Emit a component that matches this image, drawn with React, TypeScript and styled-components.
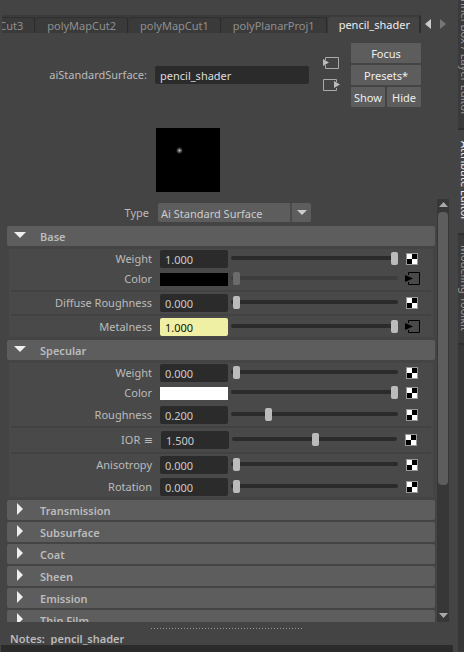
import React from "react";
import styled, { createGlobalStyle, css } from "styled-components";

const Global = createGlobalStyle`
  * { box-sizing: border-box; }
  body { margin: 0; background: #444; color: #bbb; font: 11px/16px "Noto Sans", "Open Sans", sans-serif; overflow: hidden; }
  button, input, select { font: inherit; color: inherit; margin: 0; border: 0; padding: 0; }
`;

const Page = styled.div`
  display: flex;
  height: 100vh;
`;
const Editor = styled.main`
  flex: 1;
  min-width: 0;
  display: flex;
  flex-direction: column;
`;

/* Node tabs */
const TabBar = styled.nav`
  display: flex;
  align-items: flex-start;
  padding: 15px 12px 0 2px;
`;
const TabStrip = styled.div`
  flex: 1;
  min-width: 0;
  display: flex;
  justify-content: flex-end;
  gap: 1px;
  overflow: hidden;
  background: #383838;
  border-top: 2px solid #3b3b3b;
  border-right: 2px solid #2f2f2f;
`;
const Tab = styled.button<{ $active?: boolean }>`
  flex: none;
  height: 16px;
  padding: 0 ${(p) => (p.$active ? 9 : 11)}px 0 11px;
  line-height: 16px;
  background: ${(p) => (p.$active ? "#444" : "#3a3a3a")};
  color: ${(p) => (p.$active ? "#eee" : "#8f8f8f")};
  border-radius: 3px 3px 0 0;
  ${(p) =>
    !p.$active &&
    css`
      border-top: 1px solid #2f2f2f;
      border-right: 1px solid #2b2b2b;
    `}
`;
const TabArrows = styled.div`
  display: flex;
  gap: 9px;
  padding: 4px 0 0 4px;
`;
const IconButton = styled.button`
  display: block;
  background: none;
  line-height: 0;
`;

/* Node header */
const NodeHeader = styled.header`
  display: grid;
  grid-template-columns: 147px minmax(80px, 154px) 16px 70px;
  column-gap: 8px;
  align-items: center;
  padding-top: 10px;
`;
const NodeLabel = styled.label`
  text-align: right;
`;
const NameInput = styled.input`
  width: 100%;
  height: 18px;
  padding: 1px 5px 0;
  background: #2b2b2b;
  color: #ddd;
  border-radius: 2px;
`;
const Connections = styled.div`
  display: grid;
  gap: 8px;
  padding: 0 0 2px 6px;
`;
const HeaderButtons = styled.div`
  display: grid;
  grid-template-columns: 1fr 1fr;
  gap: 2px;
  margin-left: 10px;
  width: 70px;
`;
const PushButton = styled.button<{ $wide?: boolean }>`
  height: 20px;
  background: #5d5d5d;
  color: #eee;
  border-radius: 1px;
  padding-top: 2px;
  line-height: 16px;
  grid-column: ${(p) => (p.$wide ? "1 / -1" : "auto")};
`;
const Swatch = styled.div`
  height: 64px;
  margin: 21px 0 7px 156px;
  line-height: 0;
`;

/* Attribute list */
const ScrollPane = styled.div`
  flex: 1;
  min-height: 0;
  display: flex;
  gap: 2px;
  padding: 0 9px 0 7px;
`;
const Attributes = styled.div`
  flex: 1;
  min-width: 0;
  overflow: hidden;
`;
const ScrollBar = styled.div`
  width: 12px;
  display: flex;
  flex-direction: column;
  align-items: center;
  background: #373737;
  padding: 3px 0 4px;
`;
const ScrollTrack = styled.div`
  flex: 1;
  align-self: stretch;
  padding: 5px 1px 0;
`;
const ScrollThumb = styled.div`
  height: 68%;
  background: #5d5d5d;
  border-radius: 4px;
`;
const TypeRow = styled.div`
  display: flex;
  align-items: center;
  gap: 9px;
  padding: 4px 0;
`;
const TypeLabel = styled.label`
  width: 142px;
  text-align: right;
`;
const SelectBox = styled.div`
  display: grid;
  grid-template-columns: 132px 19px;
  gap: 2px;
  align-items: center;
  height: 19px;
  background: linear-gradient(90deg, #5d5d5d 132px, #4a4a4a 132px, #4a4a4a 134px, #5d5d5d 134px);
  border-radius: 2px;
`;
const TypeSelect = styled.select`
  grid-area: 1 / 1 / 2 / 3;
  appearance: none;
  width: 100%;
  height: 19px;
  padding: 2px 3px 0;
  background: transparent;
  color: #ccc;
`;
const SelectArrow = styled.span`
  grid-area: 1 / 2;
  justify-self: center;
  line-height: 0;
  pointer-events: none;
`;
const SectionHeader = styled.button`
  display: flex;
  align-items: center;
  width: 100%;
  height: 20px;
  margin-bottom: 2px;
  padding: 2px 0 0;
  background: #5d5d5d;
  border-radius: 2px;
  font-weight: 600;
  text-align: left;
`;
const Twisty = styled.span`
  width: 33px;
  padding: 0 0 4px 7px;
  line-height: 0;
`;
const SectionBody = styled.div`
  display: flex;
  flex-direction: column;
  margin: 3px 2px;
  padding: 1px 2px 0;
  background: #494949;
`;
const Row = styled.div<{ $swatch?: boolean; $inset?: boolean }>`
  display: grid;
  grid-template-columns: 149px 68px minmax(60px, 1fr) 33px;
  align-items: center;
  height: ${(p) => (p.$swatch ? 20 : 18)}px;
  margin: ${(p) => (p.$swatch ? "0" : p.$inset ? "1px 0 2px" : "0 0 1px")};
  padding: 0 ${(p) => (p.$inset ? 1 : 0)}px;
`;
const AttrName = styled.div`
  padding-right: 8px;
  text-align: right;
`;
const MenuMark = styled.span`
  font-family: "DejaVu Sans", sans-serif;
  line-height: 1;
`;
const Gap = styled.div`
  height: 3px;
`;
const Rule = styled.hr`
  width: 100%;
  height: 2px;
  margin: 1px 0 2px;
  border: 0;
  background: #424242;
`;
const NumberField = styled.input<{ $keyed?: boolean }>`
  width: 68px;
  height: 18px;
  padding: 1px 5px 0;
  border-radius: 2px;
  background: ${(p) => (p.$keyed ? "#f0f0a5" : "#2b2b2b")};
  color: ${(p) => (p.$keyed ? "#111" : "#ccc")};
`;
const ColorChip = styled.button<{ $color: string }>`
  display: block;
  width: 68px;
  height: 13px;
  background: ${(p) => p.$color};
`;
const Field = styled.div`
  line-height: 0;
`;
const Track = styled.div<{ $off?: boolean }>`
  height: 4px;
  margin: 0 0 2px 3px;
  border-radius: 2px;
  background: ${(p) => (p.$off ? "#3d3d3d" : "#2b2b2b")};
`;
const Range = styled.input`
  appearance: none;
  display: block;
  width: calc(100% - 2px);
  height: 13px;
  margin-left: 2px;
  background: transparent;
  transform: translateY(-4px);
  &::-webkit-slider-thumb {
    appearance: none;
    width: 7px;
    height: 13px;
    border-radius: 2px;
    background: #bbb;
  }
  &:disabled::-webkit-slider-thumb { background: #6b6b6b; }
`;
const MapCell = styled.div<{ $linked?: boolean }>`
  padding: 0 0 1px ${(p) => (p.$linked ? 7 : 8)}px;
`;

/* Footer */
const SplitterBar = styled.div`
  padding: 6px 5px 0 1px;
`;
const Splitter = styled.div`
  width: 152px;
  height: 1px;
  margin: 0 auto;
  background: repeating-linear-gradient(90deg, #999 0 1px, transparent 1px 3px);
`;
const Notes = styled.label`
  padding: 2px 10px 0;
  height: 16px;
  font-weight: 600;
  white-space: pre;
`;
const NotesBox = styled.textarea`
  height: 7px;
  margin: 0 5px 0 1px;
  border: 0;
  padding: 0;
  resize: none;
  background: #2b2b2b;
`;

/* Docked panel tabs */
const Dock = styled.aside`
  width: 6px;
  flex: none;
  overflow: hidden;
  background: #373737;
`;
const DockTab = styled.button<{ $h: number; $active?: boolean }>`
  display: flex;
  align-items: flex-end;
  justify-content: flex-end;
  width: 20px;
  height: ${(p) => p.$h}px;
  padding: 0 0 12px;
  line-height: 14px;
  writing-mode: vertical-rl;
  white-space: nowrap;
  background: ${(p) => (p.$active ? "#444" : "#3a3a3a")};
  color: ${(p) => (p.$active ? "#eee" : "#999")};
  border-bottom: 2px solid #2e2e2e;
`;

const Triangle = ({ points, w, h, fill = "#ccc" }: { points: string; w: number; h: number; fill?: string }) => (
  <svg width={w} height={h} viewBox={`0 0 ${w} ${h}`}>
    <polygon points={points} fill={fill} />
  </svg>
);

const Checker = () => (
  <svg width="12" height="12" shapeRendering="crispEdges">
    <rect width="12" height="12" fill="#999" />
    <rect x="1" y="1" width="10" height="10" fill="#fff" />
    <path d="M6 1h5v5H6zM1 6h5v5H1z" fill="#000" />
  </svg>
);

const Linked = () => (
  <svg width="15" height="13">
    <path d="M3.500 3V.5H14.500V12.500H3.500V10" fill="none" stroke="#000" />
    <path d="M0 3L8 6.500L0 10z" fill="#000" />
  </svg>
);

type AttrProps = {
  name: string;
  id: string;
  value: number;
  text?: string;
  color?: string;
  keyed?: boolean;
  linked?: boolean;
  off?: boolean;
  max?: number;
  menu?: boolean;
};

const Attr = ({ name, id, value, text, color, keyed, linked, off, max = 1, menu }: AttrProps) => (
  <Row $swatch={!!color} $inset={menu}>
    <AttrName>
      <label htmlFor={id}>
        {name}
        {menu && <MenuMark> ≡</MenuMark>}
      </label>
    </AttrName>
    <Field>{color ? <ColorChip id={id} $color={color} /> : <NumberField id={id} defaultValue={text} $keyed={keyed} />}</Field>
    <Track $off={off}>
      <Range type="range" aria-label={`${name} slider`} min={0} max={max} step={0.001} defaultValue={value} disabled={off} />
    </Track>
    <MapCell $linked={linked}>
      <IconButton aria-label={`${name} map`}>{linked ? <Linked /> : <Checker />}</IconButton>
    </MapCell>
  </Row>
);

const Section = ({ title, open }: { title: string; open?: boolean }) => (
  <SectionHeader aria-expanded={!!open}>
    <Twisty>
      {open ? <Triangle points="0,0 12,0 6,6" w={12} h={6} fill="#eee" /> : <Triangle points="3,0 9,6 3,12" w={12} h={12} fill="#eee" />}
    </Twisty>
    {title}
  </SectionHeader>
);

export default function App() {
  return (
    <Page>
      <Global />
      <Editor>
        <TabBar>
          <TabStrip>
            <Tab>polyMapCut3</Tab>
            <Tab>polyMapCut2</Tab>
            <Tab>polyMapCut1</Tab>
            <Tab>polyPlanarProj1</Tab>
            <Tab $active>pencil_shader</Tab>
          </TabStrip>
          <TabArrows>
            <IconButton aria-label="Previous tab"><Triangle points="6,0 6,10 0,5" w={6} h={10} /></IconButton>
            <IconButton aria-label="Next tab"><Triangle points="0,0 0,10 6,5" w={6} h={10} fill="#777" /></IconButton>
          </TabArrows>
        </TabBar>
        <NodeHeader>
          <NodeLabel htmlFor="node">aiStandardSurface:</NodeLabel>
          <NameInput id="node" defaultValue="pencil_shader" />
          <Connections>
            <IconButton aria-label="Input connection">
              <svg width="17" height="14">
                <path d="M2.500 4V1.500H15.500V12.500H2.500V9" fill="none" stroke="#aaa" />
                <path d="M0 3L6 6.500L0 10z" fill="#bbb" />
              </svg>
            </IconButton>
            <IconButton aria-label="Output connection">
              <svg width="17" height="14">
                <path d="M13.500 4V1.500H.5V12.500H13.500V10" fill="none" stroke="#aaa" />
                <path d="M11 3L17 6.500L11 10z" fill="#bbb" />
              </svg>
            </IconButton>
          </Connections>
          <HeaderButtons>
            <PushButton $wide>Focus</PushButton>
            <PushButton $wide>Presets*</PushButton>
            <PushButton>Show</PushButton>
            <PushButton>Hide</PushButton>
          </HeaderButtons>
        </NodeHeader>
        <Swatch>
          <svg width="64" height="64" role="img" aria-label="Material sample">
            <defs>
              <radialGradient id="glint">
                <stop offset="0" stopColor="#ccc" />
                <stop offset="0.4" stopColor="#666" />
                <stop offset="1" stopColor="#000" />
              </radialGradient>
            </defs>
            <rect width="64" height="64" />
            <circle cx="23.500" cy="22.500" r="3.500" fill="url(#glint)" />
          </svg>
        </Swatch>
        <ScrollPane>
          <Attributes>
            <TypeRow>
              <TypeLabel htmlFor="type">Type</TypeLabel>
              <SelectBox>
                <TypeSelect id="type"><option>Ai Standard Surface</option></TypeSelect>
                <SelectArrow><Triangle points="0,0 10,0 5,5" w={10} h={5} /></SelectArrow>
              </SelectBox>
            </TypeRow>
            <Section title="Base" open />
            <SectionBody>
              <Attr id="bw" name="Weight" text="1.000" value={1} />
              <Attr id="bc" name="Color" color="#000" value={0} linked off />
              <Rule />
              <Attr id="bd" name="Diffuse Roughness" text="0.000" value={0} />
              <Rule />
              <Attr id="bm" name="Metalness" text="1.000" value={1} keyed linked />
            </SectionBody>
            <Section title="Specular" open />
            <SectionBody>
              <Attr id="sw" name="Weight" text="0.000" value={0} />
              <Attr id="sc" name="Color" color="#fff" value={1} />
              <Gap />
              <Attr id="sr" name="Roughness" text="0.200" value={0.2} />
              <Rule />
              <Attr id="si" name="IOR" text="1.500" value={1.5} max={3} menu />
              <Rule />
              <Attr id="sa" name="Anisotropy" text="0.000" value={0} />
              <Gap />
              <Attr id="so" name="Rotation" text="0.000" value={0} />
            </SectionBody>
            {["Transmission", "Subsurface", "Coat", "Sheen", "Emission", "Thin Film"].map((t) => (
              <Section key={t} title={t} />
            ))}
          </Attributes>
          <ScrollBar>
            <Triangle points="1,5 10,5 5.500,0" w={10} h={5} fill="#aaa" />
            <ScrollTrack><ScrollThumb /></ScrollTrack>
            <Triangle points="1,0 10,0 5.500,5" w={10} h={5} fill="#aaa" />
          </ScrollBar>
        </ScrollPane>
        <SplitterBar>
          <Splitter />
        </SplitterBar>
        <Notes htmlFor="notes">{"Notes:  pencil_shader"}</Notes>
        <NotesBox id="notes" />
      </Editor>
      <Dock>
        <DockTab $h={130}>Channel Box / Layer Editor</DockTab>
        <DockTab $h={105} $active>Attribute Editor</DockTab>
        <DockTab $h={110}>Modeling Toolkit</DockTab>
      </Dock>
    </Page>
  );
}
